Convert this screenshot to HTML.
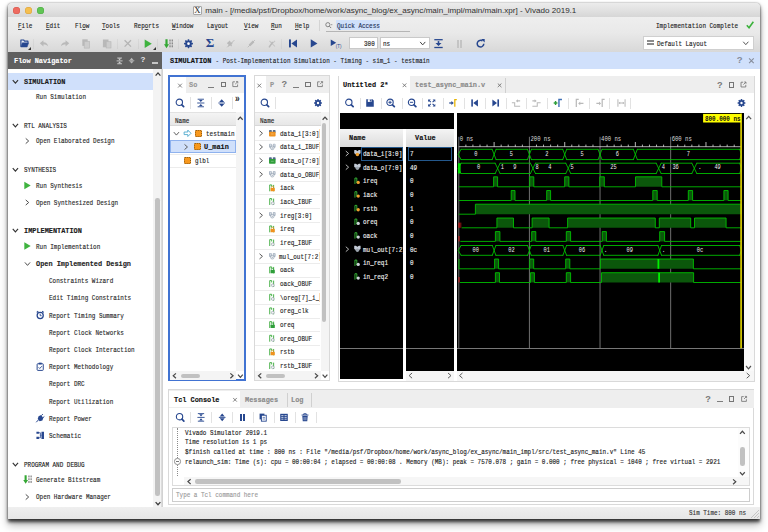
<!DOCTYPE html>
<html><head><meta charset="utf-8"><title>main - Vivado 2019.1</title>
<style>
html,body{margin:0;padding:0;background:#fff;}
body{width:768px;height:532px;overflow:hidden;position:relative;font-family:"Liberation Mono",monospace;}
.r{position:absolute;display:block;}
.t{position:absolute;white-space:pre;font:8px/10px "Liberation Mono",monospace;transform-origin:0 50%;transform:scaleX(0.7433);-webkit-text-stroke:.15px currentColor;}
.s{position:absolute;white-space:pre;font:7.6px/10px "Liberation Sans",sans-serif;}
#win{position:absolute;left:8px;top:3px;width:752px;height:516px;background:#ececec;border-radius:4px 4px 0 0;
 box-shadow:0 0 1.5px rgba(0,0,0,.5),0 2.5px 3.5px rgba(0,0,0,.7),0 6px 8px rgba(0,0,0,.3);}
u{text-decoration:underline;text-underline-offset:1px;text-decoration-thickness:.6px;text-decoration-color:#555;}
</style></head><body>
<div id="win"></div>

<div class="r" style="left:8.00px;top:3.00px;width:752.00px;height:13.70px;background:linear-gradient(#ececec,#d6d6d6);border-radius:4px 4px 0 0;border-bottom:.6px solid #b9b9b9;"></div>
<div class="r" style="left:13.10px;top:6.70px;width:7.20px;height:7.20px;background:#ee6b60;border-radius:50%;box-shadow:inset 0 0 0 .5px #d5564c;"></div>
<div class="r" style="left:24.90px;top:6.70px;width:7.20px;height:7.20px;background:#f5bf4f;border-radius:50%;box-shadow:inset 0 0 0 .5px #d8a13a;"></div>
<div class="r" style="left:36.90px;top:6.70px;width:7.20px;height:7.20px;background:#61c555;border-radius:50%;box-shadow:inset 0 0 0 .5px #4ea943;"></div>
<div class="r" style="left:192.90px;top:5.80px;width:8.70px;height:9.20px;background:#fafafa;border:.6px solid #a5a5a5;box-sizing:border-box;border-radius:1px;"></div>
<span class="s" style="left:194.300px;top:5.300px;font:8.600px/10px 'Liberation Serif',serif;color:#222">X</span>
<span class="s" id="title" style="left:205.2px;top:5.5px;color:#303030;font-size:8.08px">main - [/media/psf/Dropbox/home/work/async_blog/ex_async/main_impl/main/main.xpr] - Vivado 2019.1</span>
<div class="r" style="left:8.00px;top:17.20px;width:752.00px;height:35.10px;background:linear-gradient(#eeeeee,#e9e9e9 45%,#d8d8d8);"></div>
<span class="t" style="left:18.3px;top:20.8px;color:#222"><u>F</u>ile</span>
<span class="t" style="left:46.3px;top:20.8px;color:#222"><u>E</u>dit</span>
<span class="t" style="left:74.5px;top:20.8px;color:#222">Fl<u>o</u>w</span>
<span class="t" style="left:102px;top:20.8px;color:#222"><u>T</u>ools</span>
<span class="t" style="left:133.5px;top:20.8px;color:#222">Rep<u>o</u>rts</span>
<span class="t" style="left:171.5px;top:20.8px;color:#222"><u>W</u>indow</span>
<span class="t" style="left:207px;top:20.8px;color:#222">La<u>y</u>out</span>
<span class="t" style="left:243.5px;top:20.8px;color:#222"><u>V</u>iew</span>
<span class="t" style="left:271px;top:20.8px;color:#222"><u>R</u>un</span>
<span class="t" style="left:295px;top:20.8px;color:#222"><u>H</u>elp</span>
<div class="r" style="left:319.10px;top:19.50px;width:0.80px;height:11.50px;background:#d4d4d4;"></div>
<div class="r" style="left:325.50px;top:19.50px;width:84.50px;height:12.10px;background:none;border-bottom:.7px solid #b5b5b5;box-sizing:border-box;"></div>
<svg class="r" style="left:324px;top:21px;" width="9" height="8"><g transform="translate(0.500 0.000) scale(0.8000 0.8000)"><circle cx="4.2" cy="4.6" r="2.6" fill="none" stroke="#777" stroke-width="1.1"/><path d="M6.2 6.6L8.3 8.8" stroke="#777" stroke-width="1.2"/><path d="M8.2 4.6h1.6" stroke="#777" stroke-width=".9"/></g></svg>
<div class="r" style="left:336.30px;top:20.40px;width:43.70px;height:9.80px;background:#cfe0fb;"></div>
<span class="t" style="left:336.80px;top:20.70px;color:#1d2f55;">Quick Access</span>
<span class="t" style="left:656.44px;top:20.80px;color:#222;">Implementation Complete</span>
<svg class="r" style="left:746px;top:20px;" width="8" height="9"><g transform="translate(0.000 0.800) scale(0.8000 0.8000)"><path d="M1 5.6L3.8 8.6 9.2 1.2" fill="none" stroke="#3bb23b" stroke-width="2"/></g></svg>
<div class="r" style="left:32.80px;top:38.50px;width:0.80px;height:10.50px;background:rgba(0,0,0,.045);"></div>
<div class="r" style="left:117.00px;top:38.50px;width:0.80px;height:10.50px;background:rgba(0,0,0,.045);"></div>
<div class="r" style="left:138.00px;top:38.50px;width:0.80px;height:10.50px;background:rgba(0,0,0,.045);"></div>
<div class="r" style="left:157.20px;top:38.50px;width:0.80px;height:10.50px;background:rgba(0,0,0,.045);"></div>
<div class="r" style="left:178.20px;top:38.50px;width:0.80px;height:10.50px;background:rgba(0,0,0,.045);"></div>
<div class="r" style="left:280.80px;top:38.50px;width:0.80px;height:10.50px;background:rgba(0,0,0,.045);"></div>
<svg class="r" style="left:20px;top:38px;" width="9" height="10"><g transform="translate(0.000 0.700) scale(0.9000 0.9000)"><path d="M1 8.800V1.400h3l1 1.300h3.800v1.700" fill="#e9edf5" stroke="#27478f" stroke-width="1.300" stroke-linejoin="round"/><path d="M.8 9.200L2.600 4.600h7L7.900 9.200z" fill="#27478f" stroke="#27478f" stroke-width=".6" stroke-linejoin="round"/></g></svg>
<svg class="r" style="left:28.2px;top:47.2px" width="3" height="3" viewBox="0 0 3 3"><path d="M3 0V3H0z" fill="#333"/></svg>
<svg class="r" style="left:39px;top:38px;" width="10" height="11"><g transform="translate(0.250 0.950) scale(0.9500 0.9500)"><path d="M.6 4.6L4.4 1.3v2.1c3 .1 4.6 1.6 5 4.6C8.2 6.4 6.800 5.800 4.400 5.800V7.900z" fill="#b9b9b9"/></g></svg>
<svg class="r" style="left:60px;top:38px;" width="10" height="11"><g transform="translate(0.250 0.950) scale(0.9500 0.9500)"><path d="M.6 4.6L4.4 1.3v2.1c3 .1 4.6 1.6 5 4.6C8.2 6.4 6.800 5.800 4.400 5.800V7.900z" fill="#b9b9b9" transform="translate(10 0) scale(-1 1)"/></g></svg>
<svg class="r" style="left:81px;top:38px;" width="10" height="11"><g transform="translate(0.000 0.700)"><rect x="1.3" y=".6" width="5.4" height="6.6" fill="#b9b9b9"/><rect x="3.2" y="2.6" width="5.4" height="6.8" fill="#cdcdcd" stroke="#b9b9b9" stroke-width=".7"/></g></svg>
<svg class="r" style="left:102px;top:38px;" width="10" height="11"><g transform="translate(0.000 0.700)"><rect x=".9" y=".8" width="5.6" height="7.8" fill="#b9b9b9"/><rect x="4.2" y="3" width="4.8" height="6.3" fill="#cdcdcd" stroke="#b9b9b9" stroke-width=".7"/></g></svg>
<svg class="r" style="left:123px;top:39px;" width="9" height="9"><g transform="translate(0.800 0.400) scale(0.8000 0.8000)"><path d="M1 1L9 9M9 1L1 9" stroke="#b4b4b4" stroke-width="1.62"/></g></svg>
<svg class="r" style="left:143px;top:38px;" width="10" height="11"><g transform="translate(0.250 0.950) scale(0.9500 0.9500)"><path d="M1.5 .6L9 5 1.5 9.4z" fill="#3fb33f"/></g></svg>
<svg class="r" style="left:152.6px;top:47.2px" width="3" height="3" viewBox="0 0 3 3"><path d="M3 0V3H0z" fill="#333"/></svg>
<svg class="r" style="left:164px;top:38px;" width="10" height="11"><g transform="translate(0.000 0.700)"><path d="M1.4 .5h2.2v5h1.5L2.5 9.5 0 5.500h1.400z" fill="#35a835"/><g fill="#8b8b8b"><rect x="5.3" y=".8" width="1.4" height="2"/><rect x="7.6" y=".8" width="1.4" height="2"/><rect x="5.3" y="3.7" width="1.4" height="2"/><rect x="7.6" y="3.7" width="1.4" height="2"/><rect x="5.3" y="6.600" width="1.4" height="2"/><rect x="7.6" y="6.600" width="1.4" height="2"/></g></g></svg>
<svg class="r" style="left:183px;top:38px;" width="11" height="11"><g transform="translate(0.750 0.950) scale(0.9500 0.9500)"><rect x="4.1" y="0.3" width="1.8" height="9.4" rx=".5" fill="#27478f" transform="rotate(0 5 5)"/><rect x="4.1" y="0.3" width="1.8" height="9.4" rx=".5" fill="#27478f" transform="rotate(45 5 5)"/><rect x="4.1" y="0.3" width="1.8" height="9.4" rx=".5" fill="#27478f" transform="rotate(90 5 5)"/><rect x="4.1" y="0.3" width="1.8" height="9.4" rx=".5" fill="#27478f" transform="rotate(135 5 5)"/><circle cx="5" cy="5" r="3.4" fill="#27478f"/><circle cx="5" cy="5" r="1.4" fill="#fff"/></g></svg>
<span class="s" style="left:205.800px;top:36.1px;color:#27478f;font:bold 13px/14px 'Liberation Serif',serif">&Sigma;</span>
<svg class="r" style="left:226px;top:39px;" width="10" height="10"><g transform="translate(0.300 0.200) scale(0.9000 0.9000)"><path d="M1 9L9 1" stroke="#b9b9b9" stroke-width="1"/><path d="M2 3l2-1.600 1 2.200 2.400 .4-1.600 1.800 .6 2.400-2.200-1.200-2 1.400 .2-2.400-1.800-1.400z" fill="#b9b9b9"/></g></svg>
<svg class="r" style="left:246px;top:39px;" width="10" height="10"><g transform="translate(0.800 0.200) scale(0.9000 0.9000)"><path d="M1 9L9 1" stroke="#b9b9b9" stroke-width="1"/><path d="M3 7L7.500 2.500" stroke="#b9b9b9" stroke-width="2.6"/></g></svg>
<svg class="r" style="left:268px;top:40px;" width="8" height="8"><g transform="translate(0.700 0.200) scale(0.7000 0.7000)"><path d="M1 1L9 9M9 1L1 9" stroke="#c4c4c4" stroke-width="1.43"/></g></svg>
<svg class="r" style="left:267px;top:39px;" width="10" height="10"><g transform="translate(0.700 0.200) scale(0.9000 0.9000)"><path d="M1.500 9L5.500 3" stroke="#b9b9b9" stroke-width="1.600"/></g></svg>
<svg class="r" style="left:288px;top:38px;" width="10" height="11"><g transform="translate(0.000 0.400)"><rect x="1" y="1" width="1.900" height="8" fill="#27478f"/><path d="M9 1v8L3.400 5z" fill="#27478f"/></g></svg>
<svg class="r" style="left:309px;top:38px;" width="10" height="11"><g transform="translate(0.000 0.600) scale(0.9600 0.9600)"><path d="M1.800 .8L8.800 5 1.800 9.200z" fill="#27478f"/></g></svg>
<svg class="r" style="left:329px;top:38px;" width="10" height="10"><g transform="translate(0.700 0.800) scale(0.8600 0.8600)"><path d="M1.200 .8L7.600 4.600 1.200 8.400z" fill="#27478f"/></g></svg>
<span class="s" style="left:335.800px;top:43.5px;color:#27478f;font:4.500px/6px 'Liberation Sans',sans-serif">(T)</span>
<div class="r" style="left:348.80px;top:37.20px;width:29.20px;height:12.20px;background:#fff;border:.6px solid #c9c9c9;box-sizing:border-box;"></div>
<span class="t" style="left:363.90px;top:39.00px;color:#222;">300</span>
<div class="r" style="left:379.60px;top:37.20px;width:50.00px;height:12.20px;background:#fff;border:.6px solid #c9c9c9;box-sizing:border-box;"></div>
<span class="t" style="left:382.90px;top:39.00px;color:#222;">ns</span>
<svg class="r" style="left:419px;top:39px;" width="8" height="9"><g transform="translate(0.000 0.700) scale(0.7400 0.7400)"><path d="M1.5 3L5 7 8.5 3" fill="none" stroke="#444" stroke-width="1.35"/></g></svg>
<svg class="r" style="left:433px;top:38px;" width="11" height="11"><g transform="translate(0.500 0.700)"><path d="M.8 1h8.400" stroke="#27478f" stroke-width="1.300"/><path d="M5 2.400v4" stroke="#27478f" stroke-width="1.600"/><path d="M2 4.400h6L5 7.400z" fill="#27478f"/><path d="M.8 8.800h8.400" stroke="#27478f" stroke-width="1.300"/></g></svg>
<div class="r" style="left:457.20px;top:39.70px;width:1.40px;height:8.00px;background:#c4c4c4;"></div>
<div class="r" style="left:460.40px;top:39.70px;width:1.40px;height:8.00px;background:#c4c4c4;"></div>
<svg class="r" style="left:475px;top:38px;" width="11" height="11"><g transform="translate(0.500 0.700)"><path d="M8.300 5A3.300 3.300 0 1 1 7 2.300" fill="none" stroke="#27478f" stroke-width="1.500"/><path d="M5.600 .3h3.600v3.600z" fill="#27478f"/></g></svg>
<div class="r" style="left:642.70px;top:36.00px;width:111.60px;height:14.20px;background:#fff;border:.6px solid #cfcfcf;box-sizing:border-box;"></div>
<div class="r" style="left:647.00px;top:40.30px;width:2.60px;height:2.00px;background:#8c8c8c;"></div>
<div class="r" style="left:650.30px;top:40.30px;width:3.50px;height:2.00px;background:#8c8c8c;"></div>
<div class="r" style="left:647.00px;top:43.30px;width:2.60px;height:2.00px;background:#8c8c8c;"></div>
<div class="r" style="left:650.30px;top:43.30px;width:3.50px;height:2.00px;background:#8c8c8c;"></div>
<span class="t" style="left:657.30px;top:38.80px;color:#222;">Default Layout</span>
<svg class="r" style="left:742px;top:39px;" width="8" height="8"><g transform="translate(0.100 0.500) scale(0.7400 0.7400)"><path d="M1.5 3L5 7 8.5 3" fill="none" stroke="#555" stroke-width="1.35"/></g></svg>
<div class="r" style="left:8.00px;top:51.90px;width:154.00px;height:16.80px;background:#606060;"></div>
<span class="t" style="left:14.00px;top:56.10px;color:#fff;font-weight:bold;transform:scaleX(0.86);">Flow Navigator</span>
<svg class="r" style="left:116px;top:57px;" width="7" height="8"><g transform="translate(0.200 0.500) scale(0.6800 0.6800)"><path d="M1.500 .8h7M1.500 9.200h7M.6 5h8.800" stroke="#d2d2d2" stroke-width="1.300"/><path d="M2.800 1.600h4.400L5 4.200zM2.800 8.400h4.400L5 5.800z" fill="#d2d2d2"/></g></svg>
<svg class="r" style="left:128px;top:57px;" width="7" height="7"><g transform="translate(0.300 0.400) scale(0.6600 0.6600)"><path d="M.8 5h8.400" stroke="#b8b8b8" stroke-width="1.200"/><path d="M1.800 4.200L5 .6l3.200 3.600zM1.800 5.800L5 9.400l3.200-3.600z" fill="#b8b8b8"/></g></svg>
<span class="s" style="left:140.500px;top:55.4px;color:#e8e8e8;font-size:8px;font-weight:bold">?</span>
<div class="r" style="left:152.00px;top:62.10px;width:6.20px;height:2.00px;background:#c6c6c6;"></div>
<div class="r" style="left:8.00px;top:68.70px;width:154.00px;height:438.30px;background:#fff;"></div>
<div class="r" style="left:153.40px;top:68.70px;width:8.60px;height:438.30px;background:#f3f3f3;"></div>
<div class="r" style="left:161.30px;top:68.70px;width:0.70px;height:438.30px;background:#dcdcdc;"></div>
<div class="r" style="left:155.20px;top:198.00px;width:4.40px;height:298.00px;background:#c1c1c1;border-radius:2.2px;"></div>
<svg class="r" style="left:154px;top:70px;" width="8" height="8"><g transform="translate(0.600 0.800) scale(0.6800 0.6800)"><path d="M1.5 7L5 3 8.5 7" fill="none" stroke="#3c3c3c" stroke-width="1.84"/></g></svg>
<svg class="r" style="left:154px;top:500px;" width="8" height="7"><g transform="translate(0.600 0.000) scale(0.6800 0.6800)"><path d="M1.5 3L5 7 8.5 3" fill="none" stroke="#3c3c3c" stroke-width="1.84"/></g></svg>
<div class="r" style="left:8.00px;top:73.20px;width:145.30px;height:16.60px;background:#d0e0fb;"></div>
<svg class="r" style="left:11px;top:77px;" width="9" height="9"><g transform="translate(0.600 0.800) scale(0.7600 0.7600)"><path d="M1.5 3L5 7 8.5 3" fill="none" stroke="#333" stroke-width="1.45"/></g></svg>
<span class="t" style="left:23.80px;top:76.80px;color:#1a1a1a;font-weight:bold;transform:scaleX(0.86);">SIMULATION</span>
<span class="t" style="left:36.30px;top:92.30px;color:#262626;">Run Simulation</span>
<svg class="r" style="left:11px;top:121px;" width="9" height="9"><g transform="translate(0.600 0.500) scale(0.7600 0.7600)"><path d="M1.5 3L5 7 8.5 3" fill="none" stroke="#333" stroke-width="1.45"/></g></svg>
<span class="t" style="left:23.80px;top:120.50px;color:#1a1a1a;">RTL ANALYSIS</span>
<svg class="r" style="left:23px;top:137px;" width="8" height="8"><g transform="translate(0.500 0.300) scale(0.7400 0.7400)"><path d="M3 1.5L7 5 3 8.5" fill="none" stroke="#444" stroke-width="1.28"/></g></svg>
<span class="t" style="left:36.30px;top:136.30px;color:#262626;">Open Elaborated Design</span>
<svg class="r" style="left:11px;top:165px;" width="9" height="9"><g transform="translate(0.600 0.800) scale(0.7600 0.7600)"><path d="M1.5 3L5 7 8.5 3" fill="none" stroke="#333" stroke-width="1.45"/></g></svg>
<span class="t" style="left:23.80px;top:164.80px;color:#1a1a1a;">SYNTHESIS</span>
<svg class="r" style="left:23px;top:181px;" width="9" height="9"><g transform="translate(0.050 0.250) scale(0.8500 0.8500)"><path d="M1.5 .6L9 5 1.5 9.4z" fill="#3fb33f"/></g></svg>
<span class="t" style="left:36.30px;top:181.00px;color:#262626;">Run Synthesis</span>
<svg class="r" style="left:23px;top:198px;" width="8" height="9"><g transform="translate(0.500 0.800) scale(0.7400 0.7400)"><path d="M3 1.5L7 5 3 8.5" fill="none" stroke="#444" stroke-width="1.28"/></g></svg>
<span class="t" style="left:36.30px;top:197.80px;color:#262626;">Open Synthesized Design</span>
<svg class="r" style="left:11px;top:226px;" width="9" height="9"><g transform="translate(0.600 0.500) scale(0.7600 0.7600)"><path d="M1.5 3L5 7 8.5 3" fill="none" stroke="#333" stroke-width="1.45"/></g></svg>
<span class="t" style="left:23.80px;top:225.50px;color:#1a1a1a;font-weight:bold;transform:scaleX(0.86);">IMPLEMENTATION</span>
<svg class="r" style="left:23px;top:241px;" width="9" height="10"><g transform="translate(0.050 0.750) scale(0.8500 0.8500)"><path d="M1.5 .6L9 5 1.5 9.4z" fill="#3fb33f"/></g></svg>
<span class="t" style="left:36.30px;top:241.50px;color:#262626;">Run Implementation</span>
<svg class="r" style="left:23px;top:260px;" width="9" height="8"><g transform="translate(0.800 0.200) scale(0.7400 0.7400)"><path d="M1.5 3L5 7 8.5 3" fill="none" stroke="#444" stroke-width="1.28"/></g></svg>
<span class="t" style="left:36.30px;top:259.00px;color:#262626;font-weight:bold;transform:scaleX(0.86);">Open Implemented Design</span>
<span class="t" style="left:48.80px;top:275.50px;color:#262626;">Constraints Wizard</span>
<span class="t" style="left:48.80px;top:293.00px;color:#262626;">Edit Timing Constraints</span>
<svg class="r" style="left:35px;top:310px;" width="10" height="10"><g transform="translate(0.700 0.500) scale(0.9000 0.9000)"><circle cx="5" cy="5.600" r="3.400" fill="#fff" stroke="#27478f" stroke-width="1.400"/><path d="M5 3.600v2.200h1.600" fill="none" stroke="#27478f" stroke-width="1"/><path d="M1.200 2.200l1.600-1.400M8.800 2.200L7.200 .8" stroke="#27478f" stroke-width="1.300"/></g></svg>
<span class="t" style="left:48.80px;top:310.50px;color:#262626;">Report Timing Summary</span>
<span class="t" style="left:48.80px;top:327.50px;color:#262626;">Report Clock Networks</span>
<span class="t" style="left:48.80px;top:344.80px;color:#262626;">Report Clock Interaction</span>
<svg class="r" style="left:35px;top:362px;" width="10" height="10"><g transform="translate(0.700 0.100) scale(0.9000 0.9000)"><rect x="1.600" y="1.800" width="6.800" height="7.400" rx=".8" fill="#fff" stroke="#27478f" stroke-width="1.100"/><rect x="3.400" y=".6" width="3.200" height="2" fill="#27478f"/><path d="M3.200 5.800l1.300 1.300 2.400-2.600" fill="none" stroke="#27478f" stroke-width="1"/></g></svg>
<span class="t" style="left:48.80px;top:362.00px;color:#262626;">Report Methodology</span>
<span class="t" style="left:48.80px;top:379.30px;color:#262626;">Report DRC</span>
<span class="t" style="left:48.80px;top:396.80px;color:#262626;">Report Utilization</span>
<svg class="r" style="left:35px;top:413px;" width="10" height="10"><g transform="translate(0.700 0.800) scale(0.9000 0.9000)"><path d="M3.200 2.600L6 1.400 8.400 4.800 7.400 7.400 4.400 8.200 2.200 5.800z" fill="#27478f"/><path d="M.6 9.400L3 6.800M6.400 1.800L8 .4M8 4.400L9.600 3" stroke="#27478f" stroke-width="1.100"/></g></svg>
<span class="t" style="left:48.80px;top:413.80px;color:#262626;">Report Power</span>
<svg class="r" style="left:35px;top:430px;" width="10" height="10"><g transform="translate(0.700 0.800) scale(0.9000 0.9000)"><path d="M.8 1h2.800v2.400H.8zM.8 6.600h2.800V9H.8zM6.400 1h2.800v8H6.400z" fill="#27478f"/><path d="M3.600 2.200h1.600v5.600H3.600M5.200 5h1.200" fill="none" stroke="#27478f" stroke-width=".9"/></g></svg>
<span class="t" style="left:48.80px;top:430.80px;color:#262626;">Schematic</span>
<svg class="r" style="left:11px;top:460px;" width="9" height="9"><g transform="translate(0.600 0.500) scale(0.7600 0.7600)"><path d="M1.5 3L5 7 8.5 3" fill="none" stroke="#333" stroke-width="1.45"/></g></svg>
<span class="t" style="left:23.80px;top:459.50px;color:#1a1a1a;">PROGRAM AND DEBUG</span>
<svg class="r" style="left:23px;top:474px;" width="10" height="11"><g transform="translate(0.250 0.750) scale(0.9500 0.9500)"><path d="M1.4 .5h2.2v5h1.5L2.5 9.5 0 5.500h1.400z" fill="#35a835"/><g fill="#8b8b8b"><rect x="5.3" y=".8" width="1.4" height="2"/><rect x="7.6" y=".8" width="1.4" height="2"/><rect x="5.3" y="3.7" width="1.4" height="2"/><rect x="7.6" y="3.7" width="1.4" height="2"/><rect x="5.3" y="6.600" width="1.4" height="2"/><rect x="7.6" y="6.600" width="1.4" height="2"/></g></g></svg>
<span class="t" style="left:36.30px;top:475.00px;color:#262626;">Generate Bitstream</span>
<svg class="r" style="left:23px;top:493px;" width="8" height="8"><g transform="translate(0.500 0.300) scale(0.7400 0.7400)"><path d="M3 1.5L7 5 3 8.5" fill="none" stroke="#444" stroke-width="1.28"/></g></svg>
<span class="t" style="left:36.30px;top:492.30px;color:#262626;">Open Hardware Manager</span>
<div class="r" style="left:162.00px;top:52.30px;width:598.00px;height:16.30px;background:#d0e0fb;"></div>
<span class="t" style="left:170.00px;top:56.10px;color:#111;font-weight:bold;transform:scaleX(0.86);">SIMULATION</span>
<span class="t" style="left:212.40px;top:56.10px;color:#222;"> - Post-Implementation Simulation - Timing - sim_1 - testmain</span>
<span class="s" style="left:736.700px;top:55.400px;color:#868d9b;font-size:9.600px;font-weight:bold">?</span>
<svg class="r" style="left:748px;top:57px;" width="7" height="7"><g transform="translate(0.500 0.900) scale(0.5800 0.5800)"><path d="M1 1L9 9M9 1L1 9" stroke="#868d9b" stroke-width="1.90"/></g></svg>
<div class="r" style="left:162.00px;top:68.60px;width:598.00px;height:438.40px;background:#ffffff;"></div>
<div class="r" style="left:161.80px;top:68.60px;width:0.80px;height:438.40px;background:#d2d2d2;"></div>
<div class="r" style="left:8.00px;top:506.90px;width:752.00px;height:12.10px;background:linear-gradient(#efefef,#e6e6e6);"></div>
<div class="r" style="left:168.20px;top:74.80px;width:77.40px;height:306.30px;background:#fff;border:2px solid #4173d2;box-sizing:border-box;"></div>
<div class="r" style="left:170.20px;top:76.80px;width:73.40px;height:16.20px;background:#eeeeee;"></div>
<div class="r" style="left:170.20px;top:76.80px;width:16.00px;height:16.20px;background:#fff;"></div>
<svg class="r" style="left:177px;top:83px;" width="6" height="5"><g transform="translate(0.600 0.200) scale(0.4800 0.4800)"><path d="M1 1L9 9M9 1L1 9" stroke="#666" stroke-width="1.67"/></g></svg>
<span class="t" style="left:189.30px;top:79.90px;color:#969696;font-weight:bold;transform:scaleX(0.86);">So</span>
<div class="r" style="left:208.40px;top:86.50px;width:5.60px;height:0.90px;background:#7d7d7d;"></div>
<div class="r" style="left:220.70px;top:81.50px;width:5.80px;height:5.80px;background:none;border:.8px solid #757575;box-sizing:border-box;"></div>
<svg class="r" style="left:231px;top:80px;" width="8" height="8"><g transform="translate(0.800 0.800) scale(0.6800 0.6800)"><path d="M4.600 1.500H1.500v7h7V5.400" fill="none" stroke="#757575" stroke-width="1.250"/><path d="M5 5L8.600 1.400M6.200 1.200h2.600v2.600" fill="none" stroke="#757575" stroke-width="1.200"/></g></svg>
<svg class="r" style="left:175px;top:98px;" width="10" height="10"><g transform="translate(0.200 0.200) scale(0.9600 0.9600)"><circle cx="4.300" cy="4.300" r="3.300" fill="none" stroke="#27478f" stroke-width="1.150"/><path d="M6.900 6.900L8.800 8.800" stroke="#27478f" stroke-width="1.800" stroke-linecap="round"/></g></svg>
<div class="r" style="left:190.10px;top:97.00px;width:0.80px;height:11.70px;background:#e2e2e2;"></div>
<svg class="r" style="left:196px;top:98px;" width="10" height="10"><g transform="translate(0.300 0.500) scale(0.9000 0.9000)"><path d="M1.5 .8h7M1.5 9.2h7M1 5h8" stroke="#27478f" stroke-width="1" fill="none"/><path d="M3 1.6h4L5 4zM3 8.4h4L5 6z" fill="#27478f"/></g></svg>
<div class="r" style="left:211.00px;top:97.00px;width:0.80px;height:11.70px;background:#e2e2e2;"></div>
<svg class="r" style="left:217px;top:98px;" width="10" height="10"><g transform="translate(0.200 0.500) scale(0.9000 0.9000)"><path d="M1.3 5h7.4" stroke="#27478f" stroke-width="1"/><path d="M2.2 4L5 .8 7.8 4zM2.2 6L5 9.2 7.8 6z" fill="#27478f"/></g></svg>
<div class="r" style="left:232.20px;top:97.00px;width:0.80px;height:11.70px;background:#e2e2e2;"></div>
<span class="s" style="left:235.400px;top:93.200px;color:#222;font-size:10.500px;font-weight:bold;transform:scaleX(.8);transform-origin:0 0">&raquo;</span>
<div class="r" style="left:170.20px;top:112.40px;width:66.20px;height:14.00px;background:linear-gradient(#f4f4f4,#e7e7e7);border-top:.5px solid #e2e2e2;border-bottom:.5px solid #d8d8d8;box-sizing:border-box;"></div>
<span class="t" style="left:174.50px;top:115.50px;color:#222;">Name</span>
<div class="r" style="left:236.20px;top:112.40px;width:7.50px;height:258.60px;background:#f4f4f4;"></div>
<svg class="r" style="left:236px;top:115px;" width="8" height="7"><g transform="translate(0.900 0.000) scale(0.6800 0.6800)"><path d="M1.5 7L5 3 8.5 7" fill="none" stroke="#484848" stroke-width="1.76"/></g></svg>
<svg class="r" style="left:237px;top:372px;" width="7" height="8"><g transform="translate(0.000 0.600) scale(0.6800 0.6800)"><path d="M1.5 3L5 7 8.5 3" fill="none" stroke="#484848" stroke-width="1.76"/></g></svg>
<div class="r" style="left:169.70px;top:139.90px;width:66.70px;height:0.60px;background:#ececec;"></div>
<div class="r" style="left:169.70px;top:153.60px;width:66.70px;height:0.60px;background:#ececec;"></div>
<div class="r" style="left:169.70px;top:167.30px;width:66.70px;height:0.60px;background:#ececec;"></div>
<div class="r" style="left:170.40px;top:140.20px;width:65.30px;height:13.20px;background:#d0e0fb;border:.7px solid #8fb2ee;box-sizing:border-box;"></div>
<svg class="r" style="left:172px;top:129px;" width="9" height="9"><g transform="translate(0.700 0.900) scale(0.7400 0.7400)"><path d="M1.5 3L5 7 8.5 3" fill="none" stroke="#555" stroke-width="1.28"/></g></svg>
<svg class="r" style="left:183px;top:129px;" width="9" height="9"><g transform="translate(0.500 0.300) scale(0.8000 0.8000)"><path d="M.8 3.400h4.600V1L9.400 5 5.400 9V6.600H.8z" fill="#fff" stroke="#3aa0c8" stroke-width="1"/></g></svg>
<div class="r" style="left:194.70px;top:129.70px;width:7.00px;height:7.00px;background:#f7981d;border:.8px dotted #8a5a18;box-sizing:border-box;border-radius:1.200px;"></div>
<span class="t" style="left:206.20px;top:128.80px;color:#222;">testmain</span>
<svg class="r" style="left:182px;top:143px;" width="8" height="8"><g transform="translate(0.300 0.300) scale(0.7400 0.7400)"><path d="M3 1.5L7 5 3 8.5" fill="none" stroke="#555" stroke-width="1.28"/></g></svg>
<div class="r" style="left:193.60px;top:143.30px;width:7.00px;height:7.00px;background:#f7981d;border:.8px dotted #8a5a18;box-sizing:border-box;border-radius:1.200px;"></div>
<span class="t" style="left:204.30px;top:142.40px;color:#111;font-weight:bold;transform:scaleX(0.86);">U_main</span>
<div class="r" style="left:183.90px;top:157.00px;width:7.00px;height:7.00px;background:#f7981d;border:.8px dotted #8a5a18;box-sizing:border-box;border-radius:1.200px;"></div>
<span class="t" style="left:194.50px;top:156.10px;color:#222;">glbl</span>
<div class="r" style="left:169.70px;top:371.00px;width:66.70px;height:8.60px;background:#f4f4f4;"></div>
<svg class="r" style="left:171px;top:372px;" width="7" height="8"><g transform="translate(0.200 0.400) scale(0.6800 0.6800)"><path d="M7 1.5L3 5 7 8.5" fill="none" stroke="#484848" stroke-width="1.76"/></g></svg>
<svg class="r" style="left:228px;top:372px;" width="8" height="8"><g transform="translate(0.300 0.400) scale(0.6800 0.6800)"><path d="M3 1.5L7 5 3 8.5" fill="none" stroke="#484848" stroke-width="1.76"/></g></svg>
<div class="r" style="left:180.70px;top:373.60px;width:19.70px;height:4.40px;background:#c1c1c1;border-radius:2.200px;"></div>
<div class="r" style="left:254.00px;top:75.30px;width:75.80px;height:305.40px;background:#fff;border:0.8px solid #d9d9d9;box-sizing:border-box;"></div>
<div class="r" style="left:254.70px;top:76.00px;width:74.40px;height:17.00px;background:#eeeeee;"></div>
<div class="r" style="left:254.70px;top:76.00px;width:11.80px;height:17.00px;background:#fff;"></div>
<svg class="r" style="left:256px;top:83px;" width="6" height="5"><g transform="translate(0.900 0.200) scale(0.4800 0.4800)"><path d="M1 1L9 9M9 1L1 9" stroke="#666" stroke-width="1.67"/></g></svg>
<span class="t" style="left:269.80px;top:79.90px;color:#969696;font-weight:bold;transform:scaleX(0.86);">P</span>
<span class="s" style="left:281.60px;top:79.40px;color:#7a7a7a;font-size:9.200px;font-weight:bold">?</span>
<div class="r" style="left:293.20px;top:86.50px;width:5.60px;height:0.90px;background:#7d7d7d;"></div>
<div class="r" style="left:305.10px;top:81.50px;width:5.80px;height:5.80px;background:none;border:.8px solid #757575;box-sizing:border-box;"></div>
<svg class="r" style="left:316px;top:80px;" width="8" height="8"><g transform="translate(0.600 0.800) scale(0.6800 0.6800)"><path d="M4.600 1.500H1.500v7h7V5.400" fill="none" stroke="#757575" stroke-width="1.250"/><path d="M5 5L8.600 1.400M6.200 1.200h2.600v2.600" fill="none" stroke="#757575" stroke-width="1.200"/></g></svg>
<svg class="r" style="left:260px;top:98px;" width="10" height="10"><g transform="translate(0.200 0.200) scale(0.9600 0.9600)"><circle cx="4.300" cy="4.300" r="3.300" fill="none" stroke="#27478f" stroke-width="1.150"/><path d="M6.900 6.900L8.800 8.800" stroke="#27478f" stroke-width="1.800" stroke-linecap="round"/></g></svg>
<div class="r" style="left:275.20px;top:97.00px;width:0.80px;height:11.70px;background:#e2e2e2;"></div>
<svg class="r" style="left:313px;top:98px;" width="10" height="10"><g transform="translate(0.750 0.750) scale(0.8500 0.8500)"><rect x="4.1" y="0.3" width="1.8" height="9.4" rx=".5" fill="#27478f" transform="rotate(0 5 5)"/><rect x="4.1" y="0.3" width="1.8" height="9.4" rx=".5" fill="#27478f" transform="rotate(45 5 5)"/><rect x="4.1" y="0.3" width="1.8" height="9.4" rx=".5" fill="#27478f" transform="rotate(90 5 5)"/><rect x="4.1" y="0.3" width="1.8" height="9.4" rx=".5" fill="#27478f" transform="rotate(135 5 5)"/><circle cx="5" cy="5" r="3.4" fill="#27478f"/><circle cx="5" cy="5" r="1.4" fill="#fff"/></g></svg>
<div class="r" style="left:254.70px;top:112.40px;width:66.30px;height:14.00px;background:linear-gradient(#f4f4f4,#e7e7e7);border-top:.5px solid #e2e2e2;border-bottom:.5px solid #d8d8d8;box-sizing:border-box;"></div>
<span class="t" style="left:259.60px;top:115.50px;color:#222;">Name</span>
<div class="r" style="left:321.00px;top:112.40px;width:8.10px;height:258.60px;background:#f4f4f4;"></div>
<div class="r" style="left:322.20px;top:123.40px;width:4.20px;height:198.30px;background:#c1c1c1;border-radius:2.1px;"></div>
<svg class="r" style="left:321px;top:115px;" width="8" height="7"><g transform="translate(0.600 0.000) scale(0.6800 0.6800)"><path d="M1.5 7L5 3 8.5 7" fill="none" stroke="#484848" stroke-width="1.76"/></g></svg>
<svg class="r" style="left:321px;top:372px;" width="8" height="8"><g transform="translate(0.600 0.600) scale(0.6800 0.6800)"><path d="M1.5 3L5 7 8.5 3" fill="none" stroke="#484848" stroke-width="1.76"/></g></svg>
<div class="r" style="left:254.7px;top:126px;width:65.6px;height:245px;overflow:hidden">
<div class="r" style="left:0;top:13.80px;width:66px;height:.6px;background:#ececec"></div>
<div class="r" style="left:0;top:27.47px;width:66px;height:.6px;background:#ececec"></div>
<div class="r" style="left:0;top:41.14px;width:66px;height:.6px;background:#ececec"></div>
<div class="r" style="left:0;top:54.81px;width:66px;height:.6px;background:#ececec"></div>
<div class="r" style="left:0;top:68.48px;width:66px;height:.6px;background:#ececec"></div>
<div class="r" style="left:0;top:82.15px;width:66px;height:.6px;background:#ececec"></div>
<div class="r" style="left:0;top:95.82px;width:66px;height:.6px;background:#ececec"></div>
<div class="r" style="left:0;top:109.49px;width:66px;height:.6px;background:#ececec"></div>
<div class="r" style="left:0;top:123.16px;width:66px;height:.6px;background:#ececec"></div>
<div class="r" style="left:0;top:136.83px;width:66px;height:.6px;background:#ececec"></div>
<div class="r" style="left:0;top:150.50px;width:66px;height:.6px;background:#ececec"></div>
<div class="r" style="left:0;top:164.17px;width:66px;height:.6px;background:#ececec"></div>
<div class="r" style="left:0;top:177.84px;width:66px;height:.6px;background:#ececec"></div>
<div class="r" style="left:0;top:191.51px;width:66px;height:.6px;background:#ececec"></div>
<div class="r" style="left:0;top:205.18px;width:66px;height:.6px;background:#ececec"></div>
<div class="r" style="left:0;top:218.85px;width:66px;height:.6px;background:#ececec"></div>
<div class="r" style="left:0;top:232.52px;width:66px;height:.6px;background:#ececec"></div>
<div class="r" style="left:0;top:246.19px;width:66px;height:.6px;background:#ececec"></div>
</div>
<svg class="r" style="left:257px;top:129px;" width="8" height="8"><g transform="translate(0.300 0.600) scale(0.7400 0.7400)"><path d="M3 1.5L7 5 3 8.5" fill="none" stroke="#555" stroke-width="1.28"/></g></svg>
<svg class="r" style="left:268px;top:129px;" width="9" height="9"><g transform="translate(0.400 0.300) scale(0.7800 0.7800)"><rect x=".8" y=".8" width="3.600" height="4" rx="1" fill="#51698a"/><rect x="5.600" y=".8" width="3.600" height="4" rx="1" fill="#51698a"/><rect x=".8" y="3" width="8.400" height="6.200" rx="1" fill="#f0921e"/><path d="M3.200 6h3.600" stroke="#fff" stroke-width=".8" opacity=".5"/></g></svg>
<span class="t" style="left:279.90px;top:128.70px;color:#222;">data_i[3:0]</span>
<svg class="r" style="left:257px;top:143px;" width="8" height="8"><g transform="translate(0.300 0.270) scale(0.7400 0.7400)"><path d="M3 1.5L7 5 3 8.5" fill="none" stroke="#555" stroke-width="1.28"/></g></svg>
<svg class="r" style="left:268px;top:142px;" width="9" height="9"><g transform="translate(0.400 0.970) scale(0.7800 0.7800)"><rect x=".8" y="1" width="3.600" height="5" rx="1.200" fill="#a9b5c3"/><rect x="5.600" y="1" width="3.600" height="5" rx="1.200" fill="#a9b5c3"/><path d="M2.600 1.600v2.600M7.400 1.600v2.600" stroke="#fff" stroke-width=".7"/><circle cx="5" cy="6.300" r="2.300" fill="#eef1f4" stroke="#8d9bab" stroke-width=".8"/><circle cx="5" cy="6.300" r=".7" fill="#8d9bab"/></g></svg>
<span class="t" style="left:279.90px;top:142.37px;color:#222;">data_i_IBUF</span>
<svg class="r" style="left:257px;top:156px;" width="8" height="9"><g transform="translate(0.300 0.940) scale(0.7400 0.7400)"><path d="M3 1.5L7 5 3 8.5" fill="none" stroke="#555" stroke-width="1.28"/></g></svg>
<svg class="r" style="left:268px;top:156px;" width="9" height="9"><g transform="translate(0.400 0.640) scale(0.7800 0.7800)"><rect x=".8" y=".8" width="3.600" height="4" rx="1" fill="#51698a"/><rect x="5.600" y=".8" width="3.600" height="4" rx="1" fill="#51698a"/><rect x=".8" y="3" width="8.400" height="6.200" rx="1" fill="#2f9e3a"/><path d="M3.200 6h3.600" stroke="#fff" stroke-width=".8" opacity=".5"/></g></svg>
<span class="t" style="left:279.90px;top:156.04px;color:#222;">data_o[7:0]</span>
<svg class="r" style="left:257px;top:170px;" width="8" height="9"><g transform="translate(0.300 0.610) scale(0.7400 0.7400)"><path d="M3 1.5L7 5 3 8.5" fill="none" stroke="#555" stroke-width="1.28"/></g></svg>
<svg class="r" style="left:268px;top:170px;" width="9" height="9"><g transform="translate(0.400 0.310) scale(0.7800 0.7800)"><rect x=".8" y="1" width="3.600" height="5" rx="1.200" fill="#a9b5c3"/><rect x="5.600" y="1" width="3.600" height="5" rx="1.200" fill="#a9b5c3"/><path d="M2.600 1.600v2.600M7.400 1.600v2.600" stroke="#fff" stroke-width=".7"/><circle cx="5" cy="6.300" r="2.300" fill="#eef1f4" stroke="#8d9bab" stroke-width=".8"/><circle cx="5" cy="6.300" r=".7" fill="#8d9bab"/></g></svg>
<span class="t" style="left:279.90px;top:169.71px;color:#222;">data_o_OBUF</span>
<svg class="r" style="left:268px;top:183px;" width="9" height="9"><g transform="translate(0.400 0.980) scale(0.7800 0.7800)"><path d="M1.700 9.400V1.200h2.500v2.400M6.700 1.200v8.200" fill="none" stroke="#35a835" stroke-width="1.150"/><rect x="2.800" y="5.200" width="5.400" height="4.200" rx=".7" fill="#f0921e"/><path d="M4.200 5.200V4.200a1.300 1.300 0 0 1 2.600 0v1" fill="none" stroke="#f0921e" stroke-width=".9"/></g></svg>
<span class="t" style="left:279.90px;top:183.38px;color:#222;">iack</span>
<svg class="r" style="left:268px;top:197px;" width="9" height="9"><g transform="translate(0.400 0.650) scale(0.7800 0.7800)"><path d="M1.700 9.400V1.200h2.500v2.400M6.700 1.200v8.200" fill="none" stroke="#35a835" stroke-width="1.150"/><circle cx="5.600" cy="7.200" r="1.800" fill="#f4f4f4" stroke="#8a96a4" stroke-width=".8"/></g></svg>
<span class="t" style="left:279.90px;top:197.05px;color:#222;">iack_IBUF</span>
<svg class="r" style="left:257px;top:211px;" width="8" height="9"><g transform="translate(0.300 0.620) scale(0.7400 0.7400)"><path d="M3 1.5L7 5 3 8.5" fill="none" stroke="#555" stroke-width="1.28"/></g></svg>
<svg class="r" style="left:268px;top:211px;" width="9" height="9"><g transform="translate(0.400 0.320) scale(0.7800 0.7800)"><rect x=".8" y="1" width="3.600" height="5" rx="1.200" fill="#a9b5c3"/><rect x="5.600" y="1" width="3.600" height="5" rx="1.200" fill="#a9b5c3"/><path d="M2.600 1.600v2.600M7.400 1.600v2.600" stroke="#fff" stroke-width=".7"/><circle cx="5" cy="6.300" r="2.300" fill="#eef1f4" stroke="#8d9bab" stroke-width=".8"/><circle cx="5" cy="6.300" r=".7" fill="#8d9bab"/></g></svg>
<span class="t" style="left:279.90px;top:210.72px;color:#222;">ireg[3:0]</span>
<svg class="r" style="left:268px;top:224px;" width="9" height="9"><g transform="translate(0.400 0.990) scale(0.7800 0.7800)"><path d="M1.700 9.400V1.200h2.500v2.400M6.700 1.200v8.200" fill="none" stroke="#35a835" stroke-width="1.150"/><rect x="2.800" y="5.200" width="5.400" height="4.200" rx=".7" fill="#f0921e"/><path d="M4.200 5.200V4.200a1.300 1.300 0 0 1 2.600 0v1" fill="none" stroke="#f0921e" stroke-width=".9"/></g></svg>
<span class="t" style="left:279.90px;top:224.39px;color:#222;">ireq</span>
<svg class="r" style="left:268px;top:238px;" width="9" height="9"><g transform="translate(0.400 0.660) scale(0.7800 0.7800)"><path d="M1.700 9.400V1.200h2.500v2.400M6.700 1.200v8.200" fill="none" stroke="#35a835" stroke-width="1.150"/><circle cx="5.600" cy="7.200" r="1.800" fill="#f4f4f4" stroke="#8a96a4" stroke-width=".8"/></g></svg>
<span class="t" style="left:279.90px;top:238.06px;color:#222;">ireq_IBUF</span>
<svg class="r" style="left:257px;top:252px;" width="8" height="9"><g transform="translate(0.300 0.630) scale(0.7400 0.7400)"><path d="M3 1.5L7 5 3 8.5" fill="none" stroke="#555" stroke-width="1.28"/></g></svg>
<svg class="r" style="left:268px;top:252px;" width="9" height="9"><g transform="translate(0.400 0.330) scale(0.7800 0.7800)"><rect x=".8" y="1" width="3.600" height="5" rx="1.200" fill="#a9b5c3"/><rect x="5.600" y="1" width="3.600" height="5" rx="1.200" fill="#a9b5c3"/><path d="M2.600 1.600v2.600M7.400 1.600v2.600" stroke="#fff" stroke-width=".7"/><circle cx="5" cy="6.300" r="2.300" fill="#eef1f4" stroke="#8d9bab" stroke-width=".8"/><circle cx="5" cy="6.300" r=".7" fill="#8d9bab"/></g></svg>
<span class="t" style="left:279.40px;top:251.73px;color:#222;">mul_out[7:2</span>
<svg class="r" style="left:268px;top:266px;" width="9" height="8"><g transform="translate(0.400 0.000) scale(0.7800 0.7800)"><path d="M1.700 9.400V1.200h2.500v2.400M6.700 1.200v8.200" fill="none" stroke="#35a835" stroke-width="1.150"/><rect x="2.800" y="5.200" width="5.400" height="4.200" rx=".7" fill="#2f9e3a"/><path d="M4.200 5.200V4.200a1.300 1.300 0 0 1 2.600 0v1" fill="none" stroke="#2f9e3a" stroke-width=".9"/></g></svg>
<span class="t" style="left:279.90px;top:265.40px;color:#222;">oack</span>
<svg class="r" style="left:268px;top:279px;" width="9" height="9"><g transform="translate(0.400 0.670) scale(0.7800 0.7800)"><path d="M1.700 9.400V1.200h2.500v2.400M6.700 1.200v8.200" fill="none" stroke="#35a835" stroke-width="1.150"/><circle cx="5.600" cy="7.200" r="1.800" fill="#f4f4f4" stroke="#8a96a4" stroke-width=".8"/></g></svg>
<span class="t" style="left:279.90px;top:279.07px;color:#222;">oack_OBUF</span>
<svg class="r" style="left:268px;top:293px;" width="9" height="9"><g transform="translate(0.400 0.340) scale(0.7800 0.7800)"><path d="M1.700 9.400V1.200h2.500v2.400M6.700 1.200v8.200" fill="none" stroke="#35a835" stroke-width="1.150"/><circle cx="5.600" cy="7.200" r="1.800" fill="#f4f4f4" stroke="#8a96a4" stroke-width=".8"/></g></svg>
<span class="t" style="left:279.90px;top:292.74px;color:#222;">\oreg[7]_i_</span>
<svg class="r" style="left:268px;top:307px;" width="9" height="8"><g transform="translate(0.400 0.010) scale(0.7800 0.7800)"><path d="M1.700 9.400V1.200h2.500v2.400M6.700 1.200v8.200" fill="none" stroke="#35a835" stroke-width="1.150"/><circle cx="5.600" cy="7.200" r="1.800" fill="#f4f4f4" stroke="#8a96a4" stroke-width=".8"/></g></svg>
<span class="t" style="left:279.90px;top:306.41px;color:#222;">oreg_clk</span>
<svg class="r" style="left:268px;top:320px;" width="9" height="9"><g transform="translate(0.400 0.680) scale(0.7800 0.7800)"><path d="M1.700 9.400V1.200h2.500v2.400M6.700 1.200v8.200" fill="none" stroke="#35a835" stroke-width="1.150"/><rect x="2.800" y="5.200" width="5.400" height="4.200" rx=".7" fill="#2f9e3a"/><path d="M4.200 5.200V4.200a1.300 1.300 0 0 1 2.600 0v1" fill="none" stroke="#2f9e3a" stroke-width=".9"/></g></svg>
<span class="t" style="left:279.90px;top:320.08px;color:#222;">oreq</span>
<svg class="r" style="left:268px;top:334px;" width="9" height="9"><g transform="translate(0.400 0.350) scale(0.7800 0.7800)"><path d="M1.700 9.400V1.200h2.500v2.400M6.700 1.200v8.200" fill="none" stroke="#35a835" stroke-width="1.150"/><circle cx="5.600" cy="7.200" r="1.800" fill="#f4f4f4" stroke="#8a96a4" stroke-width=".8"/></g></svg>
<span class="t" style="left:279.90px;top:333.75px;color:#222;">oreq_OBUF</span>
<svg class="r" style="left:268px;top:348px;" width="9" height="8"><g transform="translate(0.400 0.020) scale(0.7800 0.7800)"><path d="M1.700 9.400V1.200h2.500v2.400M6.700 1.200v8.200" fill="none" stroke="#35a835" stroke-width="1.150"/><rect x="2.800" y="5.200" width="5.400" height="4.200" rx=".7" fill="#f0921e"/><path d="M4.200 5.200V4.200a1.300 1.300 0 0 1 2.600 0v1" fill="none" stroke="#f0921e" stroke-width=".9"/></g></svg>
<span class="t" style="left:279.90px;top:347.42px;color:#222;">rstb</span>
<svg class="r" style="left:268px;top:361px;" width="9" height="9"><g transform="translate(0.400 0.690) scale(0.7800 0.7800)"><path d="M1.700 9.400V1.200h2.500v2.400M6.700 1.200v8.200" fill="none" stroke="#35a835" stroke-width="1.150"/><circle cx="5.600" cy="7.200" r="1.800" fill="#f4f4f4" stroke="#8a96a4" stroke-width=".8"/></g></svg>
<span class="t" style="left:279.90px;top:361.09px;color:#222;">rstb_IBUF</span>
<div class="r" style="left:319.90px;top:126.00px;width:1.10px;height:245.00px;background:#fff;"></div>
<div class="r" style="left:319.30px;top:128.70px;width:1.10px;height:9.00px;background:#fbd9b0;"></div>
<div class="r" style="left:319.30px;top:142.37px;width:1.10px;height:9.00px;background:#fbd9b0;"></div>
<div class="r" style="left:319.30px;top:156.04px;width:1.10px;height:9.00px;background:#fbd9b0;"></div>
<div class="r" style="left:319.30px;top:169.71px;width:1.10px;height:9.00px;background:#fbd9b0;"></div>
<div class="r" style="left:319.30px;top:251.73px;width:1.10px;height:9.00px;background:#fbd9b0;"></div>
<div class="r" style="left:319.30px;top:292.74px;width:1.10px;height:9.00px;background:#fbd9b0;"></div>
<div class="r" style="left:254.70px;top:371.00px;width:66.30px;height:8.60px;background:#f4f4f4;"></div>
<svg class="r" style="left:256px;top:372px;" width="8" height="8"><g transform="translate(0.500 0.400) scale(0.6800 0.6800)"><path d="M7 1.5L3 5 7 8.5" fill="none" stroke="#484848" stroke-width="1.76"/></g></svg>
<svg class="r" style="left:312px;top:372px;" width="8" height="8"><g transform="translate(0.900 0.400) scale(0.6800 0.6800)"><path d="M3 1.5L7 5 3 8.5" fill="none" stroke="#484848" stroke-width="1.76"/></g></svg>
<div class="r" style="left:265.70px;top:373.60px;width:19.30px;height:4.40px;background:#c1c1c1;border-radius:2.200px;"></div>
<div class="r" style="left:338.20px;top:75.50px;width:416.40px;height:306.10px;background:#fff;border:0.8px solid #d9d9d9;box-sizing:border-box;"></div>
<div class="r" style="left:338.90px;top:76.20px;width:415.00px;height:16.80px;background:#eeeeee;"></div>
<div class="r" style="left:338.90px;top:76.20px;width:71.60px;height:16.80px;background:#fff;"></div>
<span class="t" style="left:343.20px;top:79.80px;color:#111;font-weight:bold;transform:scaleX(0.86);">Untitled 2*</span>
<svg class="r" style="left:402px;top:83px;" width="5" height="5"><g transform="translate(0.200 0.000) scale(0.4600 0.4600)"><path d="M1 1L9 9M9 1L1 9" stroke="#666" stroke-width="1.74"/></g></svg>
<span class="t" style="left:414.50px;top:79.80px;color:#8a8a8a;font-weight:bold;transform:scaleX(0.86);">test_async_main.v</span>
<svg class="r" style="left:497px;top:83px;" width="5" height="5"><g transform="translate(0.300 0.000) scale(0.4600 0.4600)"><path d="M1 1L9 9M9 1L1 9" stroke="#666" stroke-width="1.74"/></g></svg>
<div class="r" style="left:505.00px;top:78.00px;width:0.80px;height:15.00px;background:#d0d0d0;"></div>
<span class="s" style="left:717.00px;top:79.70px;color:#7a7a7a;font-size:9.200px;font-weight:bold">?</span>
<div class="r" style="left:728.60px;top:81.90px;width:5.80px;height:5.80px;background:none;border:.8px solid #757575;box-sizing:border-box;"></div>
<svg class="r" style="left:740px;top:81px;" width="7" height="7"><g transform="translate(0.000 0.200) scale(0.6800 0.6800)"><path d="M4.600 1.500H1.500v7h7V5.400" fill="none" stroke="#757575" stroke-width="1.250"/><path d="M5 5L8.600 1.400M6.200 1.200h2.600v2.600" fill="none" stroke="#757575" stroke-width="1.200"/></g></svg>
<svg class="r" style="left:344px;top:98px;" width="11" height="10"><g transform="translate(0.700 0.200) scale(0.9600 0.9600)"><circle cx="4.300" cy="4.300" r="3.300" fill="none" stroke="#27478f" stroke-width="1.150"/><path d="M6.900 6.900L8.800 8.800" stroke="#27478f" stroke-width="1.800" stroke-linecap="round"/></g></svg>
<div class="r" style="left:360.00px;top:97.60px;width:0.80px;height:11.00px;background:#e2e2e2;"></div>
<svg class="r" style="left:365px;top:98px;" width="10" height="10"><g transform="translate(0.500 0.500) scale(0.9000 0.9000)"><path d="M.8 .8h7l1.400 1.400v7H.8z" fill="#27478f"/><rect x="2.600" y=".8" width="4" height="3" fill="#fff"/><rect x="4.800" y="1.200" width="1.200" height="2.200" fill="#27478f"/></g></svg>
<div class="r" style="left:380.80px;top:97.60px;width:0.80px;height:11.00px;background:#e2e2e2;"></div>
<svg class="r" style="left:385px;top:98px;" width="11" height="10"><g transform="translate(0.900 0.200) scale(0.9600 0.9600)"><circle cx="4.300" cy="4.300" r="3.300" fill="none" stroke="#27478f" stroke-width="1.150"/><path d="M6.900 6.900L8.800 8.800" stroke="#27478f" stroke-width="1.800" stroke-linecap="round"/><path d="M2.600 4.300h3.400M4.300 2.600v3.400" stroke="#27478f" stroke-width="1"/></g></svg>
<div class="r" style="left:401.50px;top:97.60px;width:0.80px;height:11.00px;background:#e2e2e2;"></div>
<svg class="r" style="left:407px;top:98px;" width="10" height="10"><g transform="translate(0.400 0.200) scale(0.9600 0.9600)"><circle cx="4.300" cy="4.300" r="3.300" fill="none" stroke="#27478f" stroke-width="1.150"/><path d="M6.900 6.900L8.800 8.800" stroke="#27478f" stroke-width="1.800" stroke-linecap="round"/><path d="M2.600 4.300h3.400" stroke="#27478f" stroke-width="1"/></g></svg>
<div class="r" style="left:422.30px;top:97.60px;width:0.80px;height:11.00px;background:#e2e2e2;"></div>
<svg class="r" style="left:427px;top:98px;" width="10" height="10"><g transform="translate(0.200 0.500) scale(0.9000 0.9000)"><path d="M1 1h3L1 4zM9 1v3L6 1zM1 9V6l3 3zM9 9H6l3-3z" fill="#27478f"/><path d="M2 2l2 2M8 2L6 4M2 8l2-2M8 8L6 6" stroke="#27478f" stroke-width="1.200"/></g></svg>
<div class="r" style="left:443.10px;top:97.60px;width:0.80px;height:11.00px;background:#e2e2e2;"></div>
<svg class="r" style="left:448px;top:98px;" width="10" height="10"><g transform="translate(0.700 0.500) scale(0.9000 0.9000)"><path d="M.6 5h3" stroke="#27478f" stroke-width="1.400"/><path d="M3 2.800L5.600 5 3 7.200z" fill="#27478f"/><path d="M9 1.200H6.800v8" fill="none" stroke="#e8b400" stroke-width="1.400"/></g></svg>
<div class="r" style="left:464.00px;top:97.60px;width:0.80px;height:11.00px;background:#e2e2e2;"></div>
<svg class="r" style="left:470px;top:98px;" width="10" height="10"><g transform="translate(0.200 0.500) scale(0.9000 0.9000)"><rect x="1.200" y="1" width="1.800" height="8" fill="#27478f"/><path d="M8.600 1v8L3.400 5z" fill="#27478f"/></g></svg>
<div class="r" style="left:485.20px;top:97.60px;width:0.80px;height:11.00px;background:#e2e2e2;"></div>
<svg class="r" style="left:491px;top:98px;" width="10" height="10"><g transform="translate(0.100 0.500) scale(0.9000 0.9000)"><rect x="7" y="1" width="1.800" height="8" fill="#27478f"/><path d="M1.400 1v8L6.600 5z" fill="#27478f"/></g></svg>
<div class="r" style="left:506.00px;top:97.60px;width:0.80px;height:11.00px;background:#e2e2e2;"></div>
<svg class="r" style="left:511px;top:98px;" width="10" height="10"><g transform="translate(0.300 0.300) scale(0.9400 0.9400)"><path d="M.6 4.800h3v3.600h5.800" fill="none" stroke="#b9b9b9" stroke-width="1.100"/><path d="M4.8 2.8L7.0 1.0999999999999999V2.1999999999999997H9.4V3.4H7.0V4.5Z" fill="#b9b9b9"/></g></svg>
<div class="r" style="left:526.40px;top:97.60px;width:0.80px;height:11.00px;background:#e2e2e2;"></div>
<svg class="r" style="left:531px;top:98px;" width="11" height="10"><g transform="translate(0.800 0.300) scale(0.9400 0.9400)"><path d="M.6 8.400h5.200V4.800h3.600" fill="none" stroke="#b9b9b9" stroke-width="1.100"/><path d="M5.2 2.8L3.0 1.0999999999999999V2.1999999999999997H0.6V3.4H3.0V4.5Z" fill="#b9b9b9"/></g></svg>
<div class="r" style="left:547.30px;top:97.60px;width:0.80px;height:11.00px;background:#e2e2e2;"></div>
<svg class="r" style="left:553px;top:98px;" width="10" height="10"><g transform="translate(0.300 0.300) scale(0.9400 0.9400)"><path d="M.4 5h4M2.400 3v4" stroke="#2e9e3a" stroke-width="1.500"/><path d="M9.200 1.300H6v8" fill="none" stroke="#3f6fb5" stroke-width="1.500"/></g></svg>
<div class="r" style="left:568.30px;top:97.60px;width:0.80px;height:11.00px;background:#e2e2e2;"></div>
<svg class="r" style="left:574px;top:98px;" width="11" height="10"><g transform="translate(0.800 0.300) scale(0.9400 0.9400)"><path d="M4.200 1.200H1.600v8" fill="none" stroke="#b9b9b9" stroke-width="1.300"/><path d="M3.6 5.4L5.800000000000001 3.5000000000000004V4.65H9.2V6.15H5.800000000000001V7.300000000000001Z" fill="#b9b9b9"/></g></svg>
<div class="r" style="left:588.90px;top:97.60px;width:0.80px;height:11.00px;background:#e2e2e2;"></div>
<svg class="r" style="left:595px;top:98px;" width="11" height="10"><g transform="translate(0.800 0.300) scale(0.9400 0.9400)"><path d="M9.400 1.200H6.800v8" fill="none" stroke="#b9b9b9" stroke-width="1.300"/><path d="M5.6 5.4L3.3999999999999995 3.5000000000000004V4.65H0.6V6.15H3.3999999999999995V7.300000000000001Z" fill="#b9b9b9"/></g></svg>
<div class="r" style="left:609.40px;top:97.60px;width:0.80px;height:11.00px;background:#e2e2e2;"></div>
<svg class="r" style="left:616px;top:98px;" width="11" height="10"><g transform="translate(0.800 0.300) scale(0.9400 0.9400)"><path d="M1.200 1v8M8.800 1v8M2.400 5h5.200" fill="none" stroke="#b9b9b9" stroke-width="1.100"/><path d="M1.800 5L3.600 3.600v2.800zM8.200 5L6.400 3.600v2.800z" fill="#b9b9b9"/></g></svg>
<div class="r" style="left:630.20px;top:97.60px;width:0.80px;height:11.00px;background:#e2e2e2;"></div>
<svg class="r" style="left:737px;top:98px;" width="9" height="10"><g transform="translate(0.250 0.750) scale(0.8500 0.8500)"><rect x="4.1" y="0.3" width="1.8" height="9.4" rx=".5" fill="#27478f" transform="rotate(0 5 5)"/><rect x="4.1" y="0.3" width="1.8" height="9.4" rx=".5" fill="#27478f" transform="rotate(45 5 5)"/><rect x="4.1" y="0.3" width="1.8" height="9.4" rx=".5" fill="#27478f" transform="rotate(90 5 5)"/><rect x="4.1" y="0.3" width="1.8" height="9.4" rx=".5" fill="#27478f" transform="rotate(135 5 5)"/><circle cx="5" cy="5" r="3.4" fill="#27478f"/><circle cx="5" cy="5" r="1.4" fill="#fff"/></g></svg>
<div class="r" style="left:339.60px;top:113.40px;width:404.00px;height:265.90px;background:#000;"></div>
<div class="r" style="left:403.10px;top:128.60px;width:2.80px;height:252.40px;background:#fff;"></div>
<div class="r" style="left:453.80px;top:113.40px;width:2.80px;height:267.60px;background:#fff;"></div>
<div class="r" style="left:405.90px;top:370.70px;width:47.90px;height:10.10px;background:#f6f6f6;"></div>
<div class="r" style="left:456.60px;top:370.70px;width:297.30px;height:10.10px;background:#f6f6f6;"></div>
<svg class="r" style="left:406px;top:371px;" width="9" height="9"><g transform="translate(0.900 0.900) scale(0.7400 0.7400)"><path d="M7 1.5L3 5 7 8.5" fill="none" stroke="#555" stroke-width="1.28"/></g></svg>
<svg class="r" style="left:445px;top:371px;" width="9" height="9"><g transform="translate(0.800 0.900) scale(0.7400 0.7400)"><path d="M3 1.5L7 5 3 8.5" fill="none" stroke="#555" stroke-width="1.28"/></g></svg>
<svg class="r" style="left:457px;top:371px;" width="8" height="9"><g transform="translate(0.300 0.900) scale(0.7400 0.7400)"><path d="M7 1.5L3 5 7 8.5" fill="none" stroke="#555" stroke-width="1.28"/></g></svg>
<svg class="r" style="left:744px;top:371px;" width="8" height="9"><g transform="translate(0.500 0.900) scale(0.7400 0.7400)"><path d="M3 1.5L7 5 3 8.5" fill="none" stroke="#555" stroke-width="1.28"/></g></svg>
<div class="r" style="left:743.80px;top:113.40px;width:10.10px;height:257.30px;background:#f9f9f9;"></div>
<svg class="r" style="left:745px;top:114px;" width="8" height="8"><g transform="translate(0.200 0.300) scale(0.7000 0.7000)"><path d="M1.5 7L5 3 8.5 7" fill="none" stroke="#505050" stroke-width="1.71"/></g></svg>
<svg class="r" style="left:745px;top:363px;" width="7" height="8"><g transform="translate(0.000 0.900) scale(0.7000 0.7000)"><path d="M1.5 3L5 7 8.5 3" fill="none" stroke="#505050" stroke-width="1.71"/></g></svg>
<div class="r" style="left:339.60px;top:128.60px;width:63.50px;height:18.50px;background:linear-gradient(#f4f4f4,#dcdcdc);"></div>
<div class="r" style="left:405.90px;top:128.60px;width:47.90px;height:18.50px;background:linear-gradient(#f4f4f4,#dcdcdc);"></div>
<span class="t" style="left:349.00px;top:133.30px;color:#111;font-weight:bold;transform:scaleX(0.86);">Name</span>
<span class="t" style="left:414.80px;top:133.30px;color:#111;font-weight:bold;transform:scaleX(0.86);">Value</span>
<div class="r" style="left:339.60px;top:347.60px;width:63.50px;height:0.80px;background:#777;"></div>
<div class="r" style="left:405.90px;top:347.60px;width:47.90px;height:0.80px;background:#777;"></div>
<div class="r" style="left:456.60px;top:347.60px;width:287.20px;height:0.80px;background:#777;"></div>
<div class="r" style="left:361.20px;top:147.30px;width:41.90px;height:13.40px;background:none;border:.8px solid #24588c;box-sizing:border-box;"></div>
<div class="r" style="left:407.60px;top:147.30px;width:44.60px;height:13.40px;background:none;border:.8px solid #24588c;box-sizing:border-box;"></div>
<div class="r" style="left:339.6px;top:147.1px;width:63.5px;height:200px;overflow:hidden">
<span class="t" style="left:23.4px;top:1.90px;color:#f2f2f2">data_i[3:0]</span>
<span class="t" style="left:23.4px;top:15.57px;color:#f2f2f2">data_o[7:0]</span>
<span class="t" style="left:23.4px;top:29.24px;color:#f2f2f2">ireq</span>
<span class="t" style="left:23.4px;top:42.91px;color:#f2f2f2">iack</span>
<span class="t" style="left:23.4px;top:56.58px;color:#f2f2f2">rstb</span>
<span class="t" style="left:23.4px;top:70.25px;color:#f2f2f2">oreq</span>
<span class="t" style="left:23.4px;top:83.92px;color:#f2f2f2">oack</span>
<span class="t" style="left:23.0px;top:97.59px;color:#f2f2f2">mul_out[7:2]</span>
<span class="t" style="left:23.4px;top:111.26px;color:#f2f2f2">in_req1</span>
<span class="t" style="left:23.4px;top:124.93px;color:#f2f2f2">in_req2</span>
</div>
<svg class="r" style="left:343px;top:150px;" width="8" height="7"><g transform="translate(0.700 0.000) scale(0.7000 0.7000)"><path d="M3 1.5L7 5 3 8.5" fill="none" stroke="#c8c8c8" stroke-width="1.29"/></g></svg>
<svg class="r" style="left:353px;top:149px;" width="9" height="9"><g transform="translate(0.600 0.500) scale(0.7600 0.7600)"><path d="M.8 1.200C.8 .4 3.800 .2 5 2.200 6.200 .2 9.200 .4 9.200 1.200V5L5 7.500 .8 5z" fill="#c4ccd8"/><circle cx="5" cy="6.600" r="2.300" fill="#f0a030"/></g></svg>
<span class="t" style="left:410.20px;top:149.00px;color:#f2f2f2;">7</span>
<svg class="r" style="left:343px;top:163px;" width="8" height="8"><g transform="translate(0.700 0.670) scale(0.7000 0.7000)"><path d="M3 1.5L7 5 3 8.5" fill="none" stroke="#c8c8c8" stroke-width="1.29"/></g></svg>
<svg class="r" style="left:353px;top:163px;" width="9" height="8"><g transform="translate(0.600 0.170) scale(0.7600 0.7600)"><path d="M.8 1.200C.8 .4 3.800 .2 5 2.200 6.200 .2 9.200 .4 9.200 1.200V5L5 7.500 .8 5z" fill="#c4ccd8"/><circle cx="5" cy="6.600" r="2.300" fill="#9aa3ad"/></g></svg>
<span class="t" style="left:410.20px;top:162.67px;color:#f2f2f2;">49</span>
<svg class="r" style="left:353px;top:176px;" width="9" height="9"><g transform="translate(0.700 0.940) scale(0.7800 0.7800)"><path d="M1.600 9V1.400h2.400V8" fill="none" stroke="#3cc83c" stroke-width="1.100"/><circle cx="5.800" cy="7" r="2.100" fill="#f0a030"/></g></svg>
<span class="t" style="left:410.20px;top:176.34px;color:#f2f2f2;">0</span>
<svg class="r" style="left:353px;top:190px;" width="9" height="9"><g transform="translate(0.700 0.610) scale(0.7800 0.7800)"><path d="M1.600 9V1.400h2.400V8" fill="none" stroke="#3cc83c" stroke-width="1.100"/><circle cx="5.800" cy="7" r="2.100" fill="#f0a030"/></g></svg>
<span class="t" style="left:410.20px;top:190.01px;color:#f2f2f2;">0</span>
<svg class="r" style="left:353px;top:204px;" width="9" height="9"><g transform="translate(0.700 0.280) scale(0.7800 0.7800)"><path d="M1.600 9V1.400h2.400V8" fill="none" stroke="#3cc83c" stroke-width="1.100"/><circle cx="5.800" cy="7" r="2.100" fill="#f0a030"/></g></svg>
<span class="t" style="left:410.20px;top:203.68px;color:#f2f2f2;">1</span>
<svg class="r" style="left:353px;top:217px;" width="9" height="9"><g transform="translate(0.700 0.950) scale(0.7800 0.7800)"><path d="M1.600 9V1.400h2.400V8" fill="none" stroke="#3cc83c" stroke-width="1.100"/><circle cx="5.800" cy="7" r="2.100" fill="#cfd4da"/></g></svg>
<span class="t" style="left:410.20px;top:217.35px;color:#f2f2f2;">0</span>
<svg class="r" style="left:353px;top:231px;" width="9" height="9"><g transform="translate(0.700 0.620) scale(0.7800 0.7800)"><path d="M1.600 9V1.400h2.400V8" fill="none" stroke="#3cc83c" stroke-width="1.100"/><circle cx="5.800" cy="7" r="2.100" fill="#cfd4da"/></g></svg>
<span class="t" style="left:410.20px;top:231.02px;color:#f2f2f2;">0</span>
<svg class="r" style="left:343px;top:245px;" width="8" height="8"><g transform="translate(0.700 0.690) scale(0.7000 0.7000)"><path d="M3 1.5L7 5 3 8.5" fill="none" stroke="#c8c8c8" stroke-width="1.29"/></g></svg>
<svg class="r" style="left:353px;top:245px;" width="9" height="8"><g transform="translate(0.600 0.190) scale(0.7600 0.7600)"><path d="M.8 1.200C.8 .4 3.800 .2 5 2.200 6.200 .2 9.200 .4 9.200 1.200V5L5 7.500 .8 5z" fill="#c4ccd8"/><circle cx="5" cy="6.600" r="2.300" fill="#9aa3ad"/></g></svg>
<span class="t" style="left:410.20px;top:244.69px;color:#f2f2f2;">0c</span>
<svg class="r" style="left:353px;top:258px;" width="9" height="9"><g transform="translate(0.700 0.960) scale(0.7800 0.7800)"><path d="M1.600 9V1.400h2.400V8" fill="none" stroke="#3cc83c" stroke-width="1.100"/><circle cx="5.800" cy="7" r="2.100" fill="#cfd4da"/></g></svg>
<span class="t" style="left:410.20px;top:258.36px;color:#f2f2f2;">0</span>
<svg class="r" style="left:353px;top:272px;" width="9" height="9"><g transform="translate(0.700 0.630) scale(0.7800 0.7800)"><path d="M1.600 9V1.400h2.400V8" fill="none" stroke="#3cc83c" stroke-width="1.100"/><circle cx="5.800" cy="7" r="2.100" fill="#cfd4da"/></g></svg>
<span class="t" style="left:410.20px;top:272.03px;color:#f2f2f2;">0</span>
<svg class="r" style="left:456px;top:113px;font-family:'Liberation Mono',monospace;overflow:hidden;" width="288" height="258"><g transform="translate(0.600 0.400)"><path d="M2.20 23.40V234.80" stroke="#8c8c8c" stroke-width=".8"/><path d="M72.82 23.40V234.80" stroke="#8c8c8c" stroke-width=".8"/><path d="M143.44 23.40V234.80" stroke="#8c8c8c" stroke-width=".8"/><path d="M214.06 23.40V234.80" stroke="#8c8c8c" stroke-width=".8"/><path d="M2.20 33.30H284.68" stroke="#d4d4d4" stroke-width=".8"/><path d="M9.26 33.30v-2.1M16.32 33.30v-2.1M23.39 33.30v-2.1M30.45 33.30v-2.1M37.51 33.30v-4.7M44.57 33.30v-2.1M51.63 33.30v-2.1M58.70 33.30v-2.1M65.76 33.30v-2.1M79.88 33.30v-2.1M86.94 33.30v-2.1M94.01 33.30v-2.1M101.07 33.30v-2.1M108.13 33.30v-4.7M115.19 33.30v-2.1M122.25 33.30v-2.1M129.32 33.30v-2.1M136.38 33.30v-2.1M150.50 33.30v-2.1M157.56 33.30v-2.1M164.63 33.30v-2.1M171.69 33.30v-2.1M178.75 33.30v-4.7M185.81 33.30v-2.1M192.87 33.30v-2.1M199.94 33.30v-2.1M207.00 33.30v-2.1M221.12 33.30v-2.1M228.18 33.30v-2.1M235.25 33.30v-2.1M242.31 33.30v-2.1M249.37 33.30v-4.7M256.43 33.30v-2.1M263.49 33.30v-2.1M270.56 33.30v-2.1M277.62 33.30v-2.1" stroke="#e4e4e4" stroke-width=".8"/><text x="3.76" y="27.50" transform="scale(0.85 1)" fill="#d8d8d8" font-size="6.6">0 ns</text><text x="86.85" y="27.50" transform="scale(0.85 1)" fill="#d8d8d8" font-size="6.6">200 ns</text><text x="169.93" y="27.50" transform="scale(0.85 1)" fill="#d8d8d8" font-size="6.6">400 ns</text><text x="253.01" y="27.50" transform="scale(0.85 1)" fill="#d8d8d8" font-size="6.6">600 ns</text><path d="M4.50 35.90L1.60 41.05L4.50 46.20M35.51 35.90L39.51 46.20M35.51 46.20L39.51 35.90M4.50 35.90H35.51M4.50 46.20H35.51M70.82 35.90L74.82 46.20M70.82 46.20L74.82 35.90M39.51 35.90H70.82M39.51 46.20H70.82M106.13 35.90L110.13 46.20M106.13 46.20L110.13 35.90M74.82 35.90H106.13M74.82 46.20H106.13M141.44 35.90L145.44 46.20M141.44 46.20L145.44 35.90M110.13 35.90H141.44M110.13 46.20H141.44M176.75 35.90L180.75 46.20M176.75 46.20L180.75 35.90M145.44 35.90H176.75M145.44 46.20H176.75M283.18 35.90L284.68 41.05L283.18 46.20M180.75 35.90H283.18M180.75 46.20H283.18" fill="none" stroke="#00c800" stroke-width="0.85" stroke-linecap="round"/><text x="27.36" y="42.20" transform="scale(0.7 1)" text-anchor="middle" fill="#eeeeee" font-size="7.6">0</text><text x="78.30" y="42.20" transform="scale(0.7 1)" text-anchor="middle" fill="#eeeeee" font-size="7.6">5</text><text x="128.75" y="42.20" transform="scale(0.7 1)" text-anchor="middle" fill="#eeeeee" font-size="7.6">2</text><text x="179.19" y="42.20" transform="scale(0.7 1)" text-anchor="middle" fill="#eeeeee" font-size="7.6">5</text><text x="229.63" y="42.20" transform="scale(0.7 1)" text-anchor="middle" fill="#eeeeee" font-size="7.6">6</text><text x="331.02" y="42.20" transform="scale(0.7 1)" text-anchor="middle" fill="#eeeeee" font-size="7.6">7</text><path d="M4.50 49.80L1.60 54.95L4.50 60.10M38.54 49.80L43.54 60.10M38.54 60.10L43.54 49.80M4.50 49.80H38.54M4.50 60.10H38.54M73.85 49.80L78.85 60.10M73.85 60.10L78.85 49.80M43.54 49.80H73.85M43.54 60.10H73.85M109.16 49.80L114.16 60.10M109.16 60.10L114.16 49.80M78.85 49.80H109.16M78.85 60.10H109.16M199.55 49.80L204.55 60.10M199.55 60.10L204.55 49.80M114.16 49.80H199.55M114.16 60.10H199.55M235.22 49.80L240.22 60.10M235.22 60.10L240.22 49.80M204.55 49.80H235.22M204.55 60.10H235.22M283.18 49.80L284.68 54.95L283.18 60.10M240.22 49.80H283.18M240.22 60.10H283.18" fill="none" stroke="#00c800" stroke-width="0.85" stroke-linecap="round"/><text x="31.39" y="56.10" transform="scale(0.7 1)" text-anchor="middle" fill="#eeeeee" font-size="7.6">0</text><text x="65.19" y="56.10" transform="scale(0.7 1)" text-anchor="middle" fill="#eeeeee" font-size="7.6">1</text><text x="83.35" y="56.10" transform="scale(0.7 1)" text-anchor="middle" fill="#eeeeee" font-size="7.6">9</text><text x="114.87" y="56.10" transform="scale(0.7 1)" text-anchor="middle" fill="#eeeeee" font-size="7.6">8</text><text x="133.29" y="56.10" transform="scale(0.7 1)" text-anchor="middle" fill="#eeeeee" font-size="7.6">4</text><text x="165.06" y="56.10" transform="scale(0.7 1)" text-anchor="middle" fill="#eeeeee" font-size="7.6">5</text><text x="224.08" y="56.10" transform="scale(0.7 1)" text-anchor="middle" fill="#eeeeee" font-size="7.6">25</text><text x="295.21" y="56.10" transform="scale(0.7 1)" text-anchor="middle" fill="#eeeeee" font-size="7.6">4</text><text x="312.86" y="56.10" transform="scale(0.7 1)" text-anchor="middle" fill="#eeeeee" font-size="7.6">36</text><text x="347.42" y="56.10" transform="scale(0.7 1)" text-anchor="middle" fill="#eeeeee" font-size="7.6">.</text><text x="372.89" y="56.10" transform="scale(0.7 1)" text-anchor="middle" fill="#eeeeee" font-size="7.6">49</text><rect x="1.30" y="49.80" width="2.7" height="10.3" fill="#00e000"/><path d="M37.00 73.40V63.40H41.00V73.40ZM73.10 73.40V63.40H77.20V73.40ZM108.10 73.40V63.40H112.30V73.40ZM143.20 73.40V63.40H147.70V73.40ZM178.90 73.40V63.40H205.20V73.40Z" fill="#0b570b"/><path d="M2.20 73.40H37.00V63.40H41.00V73.40H73.10V63.40H77.20V73.40H108.10V63.40H112.30V73.40H143.20V63.40H147.70V73.40H178.90V63.40H205.20V73.40H284.68" fill="none" stroke="#00c800" stroke-width="0.85"/><path d="M54.60 87.10V77.10H58.40V87.10ZM90.10 87.10V77.10H94.00V87.10ZM196.20 87.10V77.10H200.60V87.10ZM231.70 87.10V77.10H236.00V87.10ZM267.30 87.10V77.10H271.50V87.10Z" fill="#0b570b"/><path d="M2.20 87.10H54.60V77.10H58.40V87.10H90.10V77.10H94.00V87.10H196.20V77.10H200.60V87.10H231.70V77.10H236.00V87.10H267.30V77.10H271.50V87.10H284.68" fill="none" stroke="#00c800" stroke-width="0.85"/><path d="M18.80 100.80V90.80H284.68V100.80Z" fill="#0b570b"/><path d="M2.20 100.80H18.80V90.80H284.68V100.80H284.68" fill="none" stroke="#00c800" stroke-width="0.85"/><path d="M40.30 114.40V104.60H56.90V114.40ZM75.50 114.40V104.60H92.50V114.40ZM111.00 114.40V104.60H198.70V114.40ZM202.70 114.40V104.60H234.10V114.40ZM237.90 114.40V104.60H269.50V114.40Z" fill="#0b570b"/><path d="M5.00 114.40H40.30V104.60H56.90V114.40H75.50V104.60H92.50V114.40H111.00V104.60H198.70V114.40H202.70V104.60H234.10V114.40H237.90V104.60H269.50V114.40H284.68" fill="none" stroke="#00c800" stroke-width="0.85"/><rect x="2.20" y="109.20" width="2.600" height="5.200" fill="#6a0f0f"/><path d="M2.40 109.20v5.200" stroke="#e02020" stroke-width=".9"/><path d="M38.80 128.00V118.20H43.30V128.00ZM75.10 128.00V118.20H79.20V128.00ZM109.70 128.00V118.20H114.00V128.00ZM145.60 128.00V118.20H149.80V128.00ZM203.10 128.00V118.20H208.00V128.00Z" fill="#0b570b"/><path d="M3.70 128.00H38.80V118.20H43.30V128.00H75.10V118.20H79.20V128.00H109.70V118.20H114.00V128.00H145.60V118.20H149.80V128.00H203.10V118.20H208.00V128.00H284.68" fill="none" stroke="#00c800" stroke-width="0.85"/><path d="M2.40 122.60v5.400" stroke="#e02020" stroke-width="1"/><path d="M4.50 132.10L1.60 137.00L4.50 141.90M35.71 132.10L39.31 141.90M35.71 141.90L39.31 132.10M4.50 132.10H35.71M4.50 141.90H35.71M71.02 132.10L74.62 141.90M71.02 141.90L74.62 132.10M39.31 132.10H71.02M39.31 141.90H71.02M106.33 132.10L109.93 141.90M106.33 141.90L109.93 132.10M74.62 132.10H106.33M74.62 141.90H106.33M143.58 132.10L147.18 141.90M143.58 141.90L147.18 132.10M109.93 132.10H143.58M109.93 141.90H143.58M201.31 132.10L204.91 141.90M201.31 141.90L204.91 132.10M147.18 132.10H201.31M147.18 141.90H201.31M283.18 132.10L284.68 137.00L283.18 141.90M204.91 132.10H283.18M204.91 141.90H283.18" fill="none" stroke="#00c800" stroke-width="0.85" stroke-linecap="round"/><text x="27.36" y="138.15" transform="scale(0.7 1)" text-anchor="middle" fill="#eeeeee" font-size="7.6">00</text><text x="78.30" y="138.15" transform="scale(0.7 1)" text-anchor="middle" fill="#eeeeee" font-size="7.6">02</text><text x="128.75" y="138.15" transform="scale(0.7 1)" text-anchor="middle" fill="#eeeeee" font-size="7.6">01</text><text x="179.19" y="138.15" transform="scale(0.7 1)" text-anchor="middle" fill="#eeeeee" font-size="7.6">06</text><text x="212.73" y="138.15" transform="scale(0.7 1)" text-anchor="middle" fill="#eeeeee" font-size="7.6">.</text><text x="247.29" y="138.15" transform="scale(0.7 1)" text-anchor="middle" fill="#eeeeee" font-size="7.6">09</text><text x="295.71" y="138.15" transform="scale(0.7 1)" text-anchor="middle" fill="#eeeeee" font-size="7.6">.</text><text x="347.67" y="138.15" transform="scale(0.7 1)" text-anchor="middle" fill="#eeeeee" font-size="7.6">0c</text><path d="M38.00 155.40V145.60H42.00V155.40ZM73.10 155.40V145.60H77.10V155.40ZM109.10 155.40V145.60H113.20V155.40ZM143.80 155.40V145.60H236.80V155.40Z" fill="#0b570b"/><path d="M2.20 155.40H38.00V145.60H42.00V155.40H73.10V145.60H77.10V155.40H109.10V145.60H113.20V155.40H143.80V145.60H236.80V155.40H284.68" fill="none" stroke="#00c800" stroke-width="0.85"/><rect x="200.90" y="145.60" width="1.800" height="9.800" fill="#00f000"/><path d="M2.40 145.60v9.800" stroke="#00c800" stroke-width=".9"/><path d="M38.80 169.10V159.30H42.90V169.10ZM73.90 169.10V159.30H77.80V169.10ZM109.70 169.10V159.30H114.00V169.10ZM144.90 169.10V159.30H237.00V169.10Z" fill="#0b570b"/><path d="M3.40 169.10H38.80V159.30H42.90V169.10H73.90V159.30H77.80V169.10H109.70V159.30H114.00V169.10H144.90V159.30H237.00V169.10H284.68" fill="none" stroke="#00c800" stroke-width="0.85"/><rect x="201.60" y="159.30" width="1.800" height="9.800" fill="#00f000"/><path d="M2.40 163.60v5.500" stroke="#e02020" stroke-width="1"/><path d="M284.50 0V234.80" stroke="#d8cc00" stroke-width="1.700"/><rect x="246.50" y=".5" width="38" height="8.600" fill="#ffff00"/><text x="334.19" y="7.300" transform="scale(0.7433 1)" fill="#111" font-size="8" font-weight="bold">800.000 ns</text></g></svg>
<div class="r" style="left:168.40px;top:389.20px;width:586.00px;height:115.40px;background:#fff;border:0.8px solid #d9d9d9;box-sizing:border-box;"></div>
<div class="r" style="left:169.20px;top:390.00px;width:584.40px;height:17.50px;background:#eeeeee;"></div>
<div class="r" style="left:169.20px;top:391.20px;width:70.90px;height:16.30px;background:#fff;"></div>
<span class="t" style="left:174.00px;top:394.50px;color:#111;font-weight:bold;transform:scaleX(0.86);">Tcl Console</span>
<svg class="r" style="left:232px;top:397px;" width="6" height="6"><g transform="translate(0.700 0.500) scale(0.4600 0.4600)"><path d="M1 1L9 9M9 1L1 9" stroke="#666" stroke-width="1.74"/></g></svg>
<span class="t" style="left:244.80px;top:394.50px;color:#8a8a8a;font-weight:bold;transform:scaleX(0.86);">Messages</span>
<div class="r" style="left:286.60px;top:393.00px;width:0.80px;height:14.00px;background:#d0d0d0;"></div>
<span class="t" style="left:290.90px;top:394.50px;color:#8a8a8a;font-weight:bold;transform:scaleX(0.86);">Log</span>
<div class="r" style="left:311.20px;top:393.00px;width:0.80px;height:14.00px;background:#d0d0d0;"></div>
<span class="s" style="left:705.20px;top:394.40px;color:#7a7a7a;font-size:9.200px;font-weight:bold">?</span>
<div class="r" style="left:717.10px;top:401.30px;width:5.60px;height:0.90px;background:#7d7d7d;"></div>
<div class="r" style="left:728.70px;top:396.30px;width:5.80px;height:5.80px;background:none;border:.8px solid #757575;box-sizing:border-box;"></div>
<svg class="r" style="left:740px;top:395px;" width="8" height="8"><g transform="translate(0.600 0.600) scale(0.6800 0.6800)"><path d="M4.600 1.500H1.500v7h7V5.400" fill="none" stroke="#757575" stroke-width="1.250"/><path d="M5 5L8.600 1.400M6.200 1.200h2.600v2.600" fill="none" stroke="#757575" stroke-width="1.200"/></g></svg>
<svg class="r" style="left:175px;top:412px;" width="10" height="11"><g transform="translate(0.400 0.600) scale(0.9600 0.9600)"><circle cx="4.300" cy="4.300" r="3.300" fill="none" stroke="#27478f" stroke-width="1.150"/><path d="M6.900 6.900L8.800 8.800" stroke="#27478f" stroke-width="1.800" stroke-linecap="round"/></g></svg>
<div class="r" style="left:190.10px;top:412.00px;width:0.80px;height:11.00px;background:#e2e2e2;"></div>
<svg class="r" style="left:196px;top:412px;" width="10" height="10"><g transform="translate(0.500 0.900) scale(0.9000 0.9000)"><path d="M1.5 .8h7M1.5 9.2h7M1 5h8" stroke="#27478f" stroke-width="1" fill="none"/><path d="M3 1.6h4L5 4zM3 8.4h4L5 6z" fill="#27478f"/></g></svg>
<div class="r" style="left:211.00px;top:412.00px;width:0.80px;height:11.00px;background:#e2e2e2;"></div>
<svg class="r" style="left:217px;top:412px;" width="10" height="10"><g transform="translate(0.700 0.900) scale(0.9000 0.9000)"><path d="M1.3 5h7.4" stroke="#27478f" stroke-width="1"/><path d="M2.2 4L5 .8 7.8 4zM2.2 6L5 9.2 7.8 6z" fill="#27478f"/></g></svg>
<div class="r" style="left:232.20px;top:412.00px;width:0.80px;height:11.00px;background:#e2e2e2;"></div>
<div class="r" style="left:240.20px;top:413.70px;width:1.60px;height:7.40px;background:#27478f;"></div>
<div class="r" style="left:243.20px;top:413.70px;width:1.60px;height:7.40px;background:#27478f;"></div>
<div class="r" style="left:252.60px;top:412.00px;width:0.80px;height:11.00px;background:#e2e2e2;"></div>
<svg class="r" style="left:258px;top:412px;" width="10" height="10"><g transform="translate(0.500 0.900) scale(0.9000 0.9000)"><rect x="1.200" y=".8" width="5.400" height="6.400" fill="#27478f"/><rect x="3.200" y="2.600" width="5.400" height="6.600" fill="#fff" stroke="#27478f" stroke-width="1"/><path d="M4.600 5h2.600M4.600 6.800h2.600" stroke="#27478f" stroke-width=".7"/></g></svg>
<div class="r" style="left:273.60px;top:412.00px;width:0.80px;height:11.00px;background:#e2e2e2;"></div>
<svg class="r" style="left:279px;top:412px;" width="10" height="10"><g transform="translate(0.500 0.900) scale(0.9000 0.9000)"><rect x=".8" y="1" width="8.400" height="8" fill="#27478f"/><path d="M2 3h2.400M2 5h2.400M2 7h2.400M5.600 3H8M5.600 5H8M5.600 7H8" stroke="#fff" stroke-width=".8"/></g></svg>
<div class="r" style="left:294.60px;top:412.00px;width:0.80px;height:11.00px;background:#e2e2e2;"></div>
<svg class="r" style="left:300px;top:412px;" width="10" height="10"><g transform="translate(0.500 0.900) scale(0.9000 0.9000)"><path d="M1.200 2.400h7.600M3.600 2.200V1h2.800v1.200" fill="none" stroke="#27478f" stroke-width="1.100"/><path d="M2 3.400h6l-.5 5.800h-5z" fill="#27478f"/><path d="M4 4.600v3.600M6 4.600v3.600" stroke="#fff" stroke-width=".6"/></g></svg>
<div class="r" style="left:315.60px;top:412.00px;width:0.80px;height:11.00px;background:#e2e2e2;"></div>
<div class="r" style="left:172.20px;top:427.20px;width:577.60px;height:58.80px;background:#fff;border:.7px solid #dcdcdc;box-sizing:border-box;"></div>
<span class="t" style="left:184.60px;top:427.50px;color:#1a1a1a;">Vivado Simulator 2019.1</span>
<span class="t" style="left:184.60px;top:437.25px;color:#1a1a1a;">Time resolution is 1 ps</span>
<span class="t" style="left:184.60px;top:447.00px;color:#1a1a1a;">$finish called at time : 800 ns : File "/media/psf/Dropbox/home/work/async_blog/ex_async/main_impl/src/test_async_main.v" Line 45</span>
<span class="t" style="left:184.60px;top:456.75px;color:#1a1a1a;">relaunch_sim: Time (s): cpu = 00:00:04 ; elapsed = 00:00:08 . Memory (MB): peak = 7570.078 ; gain = 0.000 ; free physical = 1040 ; free virtual = 2921</span>
<div class="r" style="left:177.30px;top:428.00px;width:0.70px;height:48.00px;background:none;border-left:.7px dotted #8a8a8a;"></div>
<div class="r" style="left:174.40px;top:458.30px;width:6.40px;height:6.40px;background:#fff;border:.7px solid #8f8f8f;box-sizing:border-box;border-radius:50%;"></div>
<div class="r" style="left:176.00px;top:461.20px;width:3.20px;height:0.65px;background:#777;"></div>
<div class="r" style="left:737.60px;top:427.90px;width:11.50px;height:48.90px;background:#fcfcfc;"></div>
<svg class="r" style="left:739px;top:429px;" width="7" height="8"><g transform="translate(0.000 0.200) scale(0.6800 0.6800)"><path d="M1.5 7L5 3 8.5 7" fill="none" stroke="#484848" stroke-width="1.76"/></g></svg>
<svg class="r" style="left:739px;top:470px;" width="7" height="8"><g transform="translate(0.000 0.200) scale(0.6800 0.6800)"><path d="M1.5 3L5 7 8.5 3" fill="none" stroke="#484848" stroke-width="1.76"/></g></svg>
<div class="r" style="left:740.10px;top:447.40px;width:4.60px;height:18.80px;background:#c1c1c1;border-radius:2.300px;"></div>
<div class="r" style="left:184.00px;top:476.80px;width:565.10px;height:8.50px;background:#f6f6f6;"></div>
<svg class="r" style="left:185px;top:478px;" width="8" height="8"><g transform="translate(0.900 0.200) scale(0.6800 0.6800)"><path d="M7 1.5L3 5 7 8.5" fill="none" stroke="#484848" stroke-width="1.76"/></g></svg>
<svg class="r" style="left:731px;top:478px;" width="7" height="8"><g transform="translate(0.000 0.400) scale(0.6800 0.6800)"><path d="M3 1.5L7 5 3 8.5" fill="none" stroke="#484848" stroke-width="1.76"/></g></svg>
<div class="r" style="left:195.00px;top:479.40px;width:206.00px;height:4.50px;background:#c1c1c1;border-radius:2.200px;"></div>
<div class="r" style="left:172.10px;top:488.20px;width:577.70px;height:13.50px;background:#fff;border:.8px solid #cdcdcd;box-sizing:border-box;"></div>
<span class="t" style="left:176.40px;top:490.40px;color:#9a9a9a;">Type a Tcl command here</span>
<span class="t" style="left:688.51px;top:508.30px;color:#333;">Sim Time: 800 ns</span>
<svg class="r" style="left:751px;top:510px" width="8" height="8" viewBox="0 0 8 8"><path d="M0 8L8 0M3 8L8 3M6 8L8 6" stroke="#b5b5b5" stroke-width=".7"/></svg>
</body></html>
